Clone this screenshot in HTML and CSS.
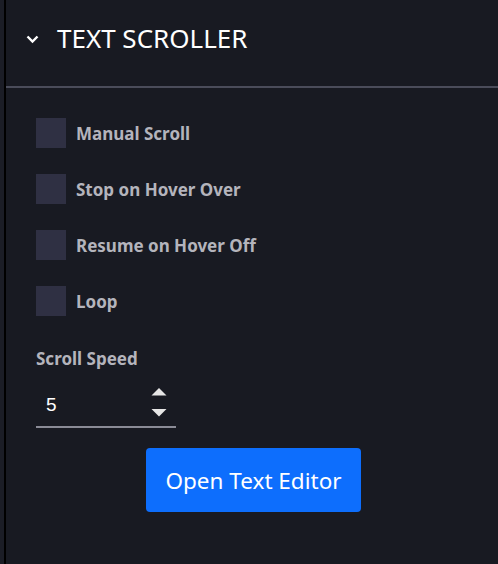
FILE: index.html
```html
<!DOCTYPE html>
<html>
<head>
<meta charset="utf-8">
<link rel="stylesheet" href="styles.css">
</head>
<body>
<div class="frame">
  <div class="panel">
    <div class="header">
      <svg class="chev" width="13" height="9" viewBox="0 0 13 9"><path d="M1.5 1.5 L6.5 6.5 L11.5 1.5" fill="none" stroke="#fff" stroke-width="2.4"/></svg>
      <span class="title">TEXT SCROLLER</span>
    </div>
    <div class="divider"></div>
    <div class="body">
      <label class="check"><span class="box"></span><span class="lbl">Manual Scroll</span></label>
      <label class="check"><span class="box"></span><span class="lbl">Stop on Hover Over</span></label>
      <label class="check"><span class="box"></span><span class="lbl">Resume on Hover Off</span></label>
      <label class="check"><span class="box"></span><span class="lbl">Loop</span></label>
      <div class="field">
        <div class="flabel">Scroll Speed</div>
        <div class="num">
          <span class="val">5</span>
          <span class="spin">
            <svg width="16" height="30" viewBox="0 0 16 30"><path d="M0.5 7.5 L8 0 L15.5 7.5 Z" fill="#e6e6e6"/><path d="M0.5 21 L15.5 21 L8 28.5 Z" fill="#e6e6e6"/></svg>
          </span>
        </div>
      </div>
      <div class="actions">
        <button class="btn">Open Text Editor</button>
      </div>
    </div>
  </div>
</div>
</body>
</html>
```
FILE: styles.css
```css
html, body {
  margin: 0;
  padding: 0;
  background: #1b1d26;
  height: 100%;
}
.frame {
  display: flex;
  height: 564px;
  padding-left: 4px;
}
.panel {
  flex: 1;
  background: #181a22;
  border-left: 2px solid #000;
  font-family: "Noto Sans", "Open Sans", sans-serif;
}
.header {
  display: flex;
  align-items: center;
  height: 86px;
  padding-left: 20px;
  box-sizing: border-box;
  padding-bottom: 10px;
}
.chev {
  display: block;
  margin-top: 2px;
}
.title {
  margin-left: 18px;
  color: #ffffff;
  font-size: 26px;
}
.divider {
  height: 2px;
  background: #4a4c5a;
}
.body {
  padding: 30px 0 0 30px;
  display: flex;
  flex-direction: column;
}
.check {
  display: flex;
  align-items: center;
  height: 30px;
  margin-bottom: 26px;
}
.box {
  width: 30px;
  height: 30px;
  background: #2f3043;
  flex: none;
}
.lbl {
  margin-left: 10px;
  color: #b4b4bc;
  font-weight: bold;
  font-size: 17px;
}
.field {
  margin-top: 6px;
}
.flabel {
  color: #b4b4bc;
  font-weight: bold;
  font-size: 17px;
  line-height: 22px;
}
.num {
  margin-top: 14px;
  width: 140px;
  height: 44px;
  box-sizing: border-box;
  border-bottom: 2px solid #8a8b96;
  display: flex;
  align-items: center;
  justify-content: space-between;
  padding: 0 9px 4px 10px;
}
.val {
  color: #ffffff;
  font-family: "Liberation Sans", Arial, sans-serif;
  font-size: 19px;
  margin-top: 4px;
}
.spin svg {
  display: block;
}
.actions {
  display: flex;
  padding-left: 110px;
  margin-top: 20px;
}
.btn {
  width: 215px;
  height: 64px;
  background: #0d6efd;
  border: none;
  border-radius: 4px;
  color: #ffffff;
  font-family: "Noto Sans", "Open Sans", sans-serif;
  font-size: 22.5px;
  padding: 0;
}
```
